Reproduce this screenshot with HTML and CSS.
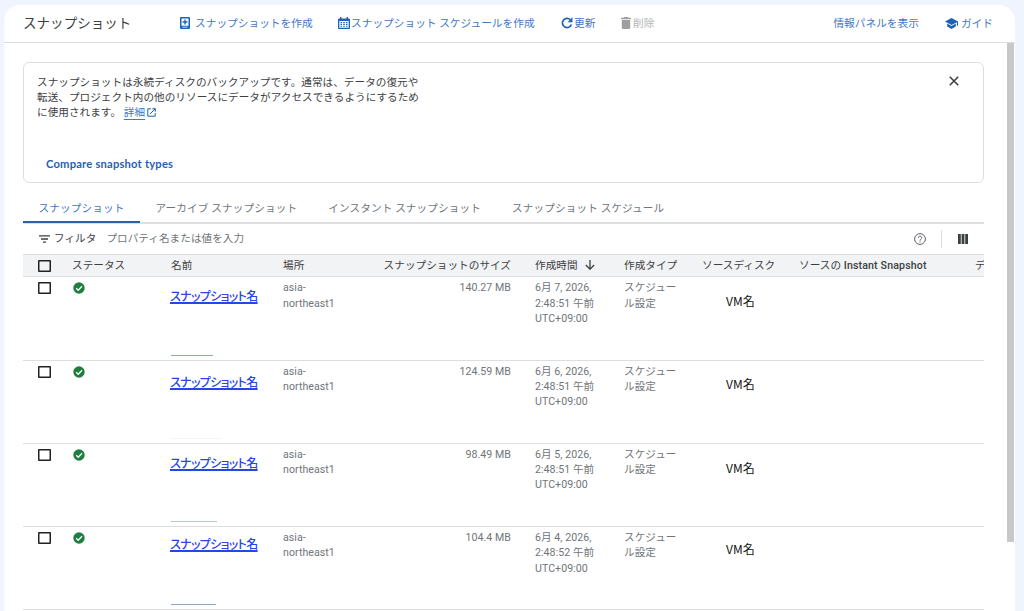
FILE: index.html
```html
<!DOCTYPE html>
<html lang="ja">
<head>
    <meta charset="UTF-8">
    <meta name="viewport" content="width=device-width, initial-scale=1.0">
    <title>スナップショット</title>
    <link rel="stylesheet" href="styles.css">
</head>
<body>
    <div class="panel">
        <header class="toolbar">
            <h1>スナップショット</h1>
            <a class="action action-create">
                <svg width="10" height="12" viewBox="0 0 10 12"><path fill="currentColor" fill-rule="evenodd" d="M1 0h8a1 1 0 0 1 1 1v10a1 1 0 0 1-1 1H1a1 1 0 0 1-1-1V1a1 1 0 0 1 1-1zM1.500 1.500v7.200h7V1.500zM4.300 2.600h1.400v1.700h1.800v1.400H5.700v1.700H4.300V5.700H2.500V4.300h1.800zM2.300 9.700v.8h5.400v-.8z"/></svg>
                <span>スナップショットを作成</span>
            </a>
            <a class="action action-schedule">
                <svg width="12" height="12" viewBox="0 0 12 12"><path fill="currentColor" fill-rule="evenodd" d="M2 0h1.500v1.500h5V0H10v1.500h1a1 1 0 0 1 1 1V11a1 1 0 0 1-1 1H1a1 1 0 0 1-1-1V2.500a1 1 0 0 1 1-1h1zM1.300 4v6.700h9.400V4zM2.500 5H4v1.300H2.500zM5.200 5h1.600v1.300H5.200zM8 5h1.500v1.300H8zM2.500 7H4v1H2.500zM5.200 7h1.600v1H5.200zM8 7h1.500v1H8zM2.500 8.700H4v1H2.500zM5.200 8.700h1.600v1H5.200zM8 8.700h1.500v1H8z"/></svg>
                <span>スナップショット スケジュールを作成</span>
            </a>
            <a class="action action-refresh">
                <svg width="12" height="12" viewBox="0 0 12 12"><path fill="none" stroke="currentColor" stroke-width="1.700" d="M9.300 2.700A4.600 4.600 0 1 0 10.400 7.500"/><path fill="currentColor" d="M11.500.3v5H6.500z"/></svg>
                <span>更新</span>
            </a>
            <a class="action action-delete">
                <svg width="10" height="12" viewBox="0 0 10 12"><path fill="currentColor" d="M3.300 0h3.400l.6.800H10v1.400H0V.8h2.700zM.8 3h8.400v7.700A1.300 1.300 0 0 1 7.900 12H2.100A1.300 1.300 0 0 1 .8 10.700z"/></svg>
                <span>削除</span>
            </a>
            <a class="action action-info"><span>情報パネルを表示</span></a>
            <a class="action action-guide">
                <svg width="13" height="11" viewBox="0 0 13 11"><path fill="currentColor" d="M6.500 0L13 3.500v4.300h-1.100V4.200L6.500 7.100 0 3.500zM2.200 5.600l4.300 2.400 4.300-2.400v2.900L6.500 11 2.200 8.500z"/></svg>
                <span>ガイド</span>
            </a>
        </header>

        <div class="body">
            <main class="content">
                <section class="notice">
                    <div class="notice-top">
                        <p>スナップショットは永続ディスクのバックアップです。通常は、データの復元や<br>転送、プロジェクト内の他のリソースにデータがアクセスできるようにするため<br>に使用されます。 <a class="more">詳細</a><svg class="external" width="9" height="9" viewBox="0 0 9 9"><path fill="none" stroke="currentColor" d="M4 .8H.8v7.400h7.400V5M5.300.7h3v3M8.200.8L3.200 5.800"/></svg></p>
                        <svg class="close" width="10" height="10" viewBox="0 0 10 10"><path stroke="currentColor" stroke-width="1.600" d="M.8.8l8.400 8.400M9.200.8L.8 9.200"/></svg>
                    </div>
                    <a class="compare">Compare snapshot types</a>
                </section>

                <nav class="tabs">
                    <a class="tab active">スナップショット</a>
                    <a class="tab">アーカイブ スナップショット</a>
                    <a class="tab">インスタント スナップショット</a>
                    <a class="tab">スナップショット スケジュール</a>
                </nav>

                <div class="filter">
                    <svg width="11" height="8" viewBox="0 0 11 8"><path stroke="currentColor" stroke-width="1.300" d="M0 .8h11M2 4h7M4 7.200h3"/></svg>
                    <span class="filter-label">フィルタ</span>
                    <span class="filter-hint">プロパティ名または値を入力</span>
                    <svg class="help" width="12" height="12" viewBox="0 0 12 12"><circle cx="6" cy="6" r="5.400" fill="none" stroke="currentColor"/><path fill="none" stroke="currentColor" d="M4.300 4.800a1.700 1.700 0 1 1 2.700 1.400C6.300 6.700 6 6.900 6 7.700M6 8.500v1.100"/></svg>
                    <span class="divider"></span>
                    <svg class="columns" width="10" height="10" viewBox="0 0 10 10"><path fill="currentColor" d="M0 0h2.800v10H0zM3.600 0h2.800v10H3.600zM7.200 0H10v10H7.200z"/></svg>
                </div>

                <div class="table">
                    <div class="row head">
                        <div><span class="checkbox"></span></div>
                        <div>ステータス</div>
                        <div>名前</div>
                        <div>場所</div>
                        <div class="size">スナップショットのサイズ</div>
                        <div>作成時間<svg class="sort" width="10" height="10" viewBox="0 0 10 10"><path fill="none" stroke="currentColor" stroke-width="1.300" d="M5 0v9M.8 5L5 9.200 9.200 5"/></svg></div>
                        <div>作成タイプ</div>
                        <div>ソースディスク</div>
                        <div>ソースの <b>Instant Snapshot</b></div>
                        <div>デ</div>
                    </div>
                    <div class="row">
                        <div><span class="checkbox"></span></div>
                        <div><svg class="ok" width="12" height="12" viewBox="0 0 12 12"><circle cx="6" cy="6" r="5.700"/><path d="M3.200 6.200l2 2 3.800-4"/></svg></div>
                        <div class="name"><a>スナップショット名</a><i></i></div>
                        <div>asia-<br>northeast1</div>
                        <div class="size">140.27 MB</div>
                        <div>6月 7, 2026,<br>2:48:51 午前<br>UTC+09:00</div>
                        <div>スケジュー<br>ル設定</div>
                        <div class="vm">VM名</div>
                    </div>
                    <div class="row">
                        <div><span class="checkbox"></span></div>
                        <div><svg class="ok" width="12" height="12" viewBox="0 0 12 12"><circle cx="6" cy="6" r="5.700"/><path d="M3.200 6.200l2 2 3.800-4"/></svg></div>
                        <div class="name"><a>スナップショット名</a><i></i></div>
                        <div>asia-<br>northeast1</div>
                        <div class="size">124.59 MB</div>
                        <div>6月 6, 2026,<br>2:48:51 午前<br>UTC+09:00</div>
                        <div>スケジュー<br>ル設定</div>
                        <div class="vm">VM名</div>
                    </div>
                    <div class="row">
                        <div><span class="checkbox"></span></div>
                        <div><svg class="ok" width="12" height="12" viewBox="0 0 12 12"><circle cx="6" cy="6" r="5.700"/><path d="M3.200 6.200l2 2 3.800-4"/></svg></div>
                        <div class="name"><a>スナップショット名</a><i></i></div>
                        <div>asia-<br>northeast1</div>
                        <div class="size">98.49 MB</div>
                        <div>6月 5, 2026,<br>2:48:51 午前<br>UTC+09:00</div>
                        <div>スケジュー<br>ル設定</div>
                        <div class="vm">VM名</div>
                    </div>
                    <div class="row">
                        <div><span class="checkbox"></span></div>
                        <div><svg class="ok" width="12" height="12" viewBox="0 0 12 12"><circle cx="6" cy="6" r="5.700"/><path d="M3.200 6.200l2 2 3.800-4"/></svg></div>
                        <div class="name"><a>スナップショット名</a><i></i></div>
                        <div>asia-<br>northeast1</div>
                        <div class="size">104.4 MB</div>
                        <div>6月 4, 2026,<br>2:48:52 午前<br>UTC+09:00</div>
                        <div>スケジュー<br>ル設定</div>
                        <div class="vm">VM名</div>
                    </div>
                </div>
            </main>
            <div class="scrollbar"></div>
        </div>
    </div>
</body>
</html>
```
FILE: styles.css
```css
:root {
    --blue: #1f62b5;
    --link: #3f78c4;
    --text: #3c4043;
    --muted: #70757a;
    --line: #dcdee0;
}

* {
    margin: 0;
    padding: 0;
    box-sizing: border-box;
}

body {
    height: 611px;
    overflow: hidden;
    padding: 5px 9px 0 4px;
    background: #f0f4fe;
    color: var(--text);
    font-family: Roboto, "Noto Sans CJK JP", sans-serif;
    font-size: 10.6px;
    line-height: 15.3px;
    letter-spacing: 0.05px;
}

svg {
    display: block;
    flex: none;
}

.panel {
    height: 606px;
    background: #fff;
    border-radius: 16px 16px 0 0;
    overflow: hidden;
}

/* Toolbar */
.toolbar {
    display: flex;
    align-items: center;
    height: 38px;
    padding: 0 22px 0 19px;
    border-bottom: 1px solid var(--line);
    white-space: nowrap;
}

.toolbar h1 {
    width: 157px;
    font-size: 13.5px;
    font-weight: 400;
}

.action {
    display: flex;
    align-items: center;
    color: var(--blue);
    font-size: 10.7px;
    letter-spacing: 0;
}

.action span {
    color: var(--link);
}

.action-create {
    gap: 5px;
    width: 158px;
}

.action-schedule {
    gap: 1px;
    width: 223px;
}

.action-refresh {
    gap: 1px;
    width: 60px;
}

.action-delete {
    gap: 2px;
    color: #9e9e9e;
}

.action-delete span {
    color: #b4b4b4;
}

.action-info {
    margin-left: auto;
}

.action-guide {
    gap: 3px;
    margin-left: 26px;
}

.body {
    display: flex;
    justify-content: space-between;
}

.content {
    width: 961px;
    margin: 19px 0 0 19px;
}

.scrollbar {
    width: 7px;
    height: 499px;
    margin-right: 1px;
    background: #c8c8c8;
}

/* Notice card */
.notice {
    height: 121px;
    padding: 11.5px 24px 0 13px;
    border: 1px solid var(--line);
    border-radius: 6px;
}

.notice-top {
    display: flex;
    justify-content: space-between;
    height: 81px;
    white-space: nowrap;
}

.more {
    color: var(--link);
    text-decoration: underline;
    text-underline-offset: 3px;
}

.external {
    display: inline-block;
    margin-left: 2px;
    vertical-align: -1px;
    color: var(--blue);
}

.close {
    margin-top: 1.5px;
}

.compare {
    margin-left: 9px;
    color: var(--blue);
    font-family: Lato, sans-serif;
    font-size: 11.2px;
    font-weight: 700;
    letter-spacing: 0.2px;
}

/* Tabs */
.tabs {
    display: flex;
    height: 41px;
    padding-top: 10px;
    border-bottom: 2px solid var(--line);
    color: var(--muted);
    white-space: nowrap;
}

.tab {
    height: 30px;
    padding: 8px 15.5px 0;
    letter-spacing: 0.14px;
}

.tab.active {
    width: 117px;
    color: var(--link);
    border-bottom: 2px solid #2c62a8;
}

/* Filter bar */
.filter {
    display: flex;
    align-items: center;
    height: 30px;
    padding: 0 16px 0 16px;
}

.filter-label {
    margin-left: 4px;
}

.filter-hint {
    margin-left: 10px;
    color: var(--muted);
}

.help {
    margin-left: auto;
    color: #5f6368;
}

.divider {
    width: 1px;
    height: 18px;
    margin: 0 16px 0 15px;
    background: var(--line);
}

/* Snapshot table */
.table {
    overflow: hidden;
}

.row {
    display: grid;
    grid-template-columns: 34px 99px 112px 80px 172px 89px 78px 97px 176px 9px;
    height: 83.2px;
    padding: 3px 0 0 15px;
    border-bottom: 1px solid var(--line);
    color: var(--muted);
    white-space: nowrap;
}

.row.head {
    height: 23.4px;
    background: #f1f3f4;
    border-top: 1px solid var(--line);
    color: var(--text);
}

.row .size {
    padding-right: 24px;
    text-align: right;
}

.head b {
    font-weight: 500;
    letter-spacing: 0.15px;
}

.sort {
    display: inline-block;
    margin-left: 7px;
    vertical-align: -1px;
}

.checkbox {
    display: block;
    width: 13px;
    height: 12px;
    margin-top: 2px;
    border-radius: 1px;
    box-shadow: inset 0 0 0 1.5px #222;
}

.ok {
    margin: 2px 0 0 0.5px;
    fill: #1e7e3e;
}

.ok path {
    fill: none;
    stroke: #fff;
    stroke-width: 1.3;
}

.name {
    display: flex;
    flex-direction: column;
    align-items: flex-start;
    justify-content: space-between;
    padding: 8px 0 4px;
}

.name a {
    margin-left: -1px;
    color: #2546e8;
    font-family: "Noto Sans CJK JP", sans-serif;
    font-size: 12px;
    font-weight: 500;
    font-feature-settings: "palt";
    letter-spacing: -0.65px;
    text-decoration: underline;
    text-decoration-thickness: 1.5px;
    text-underline-offset: 1px;
}

.name i {
    width: 42px;
    height: 1px;
    background: #8fa6c0;
}

.vm {
    padding: 13px 0 0 24px;
    color: #111;
    font-family: "Noto Sans CJK JP", sans-serif;
    font-size: 12px;
}

.row:nth-child(3) .name {
    padding-top: 10px;
}

.row:nth-child(3) .vm {
    padding-top: 12px;
}

.row:nth-child(3) i {
    width: 50px;
    background: #f0f3f8;
}

.row:nth-child(4) i {
    width: 46px;
    background: #b4c6d4;
}

.row:nth-child(5) .name {
    padding-top: 6px;
}

.row:nth-child(5) .vm {
    padding-top: 11px;
}

.row:nth-child(5) i {
    width: 45px;
}
```
